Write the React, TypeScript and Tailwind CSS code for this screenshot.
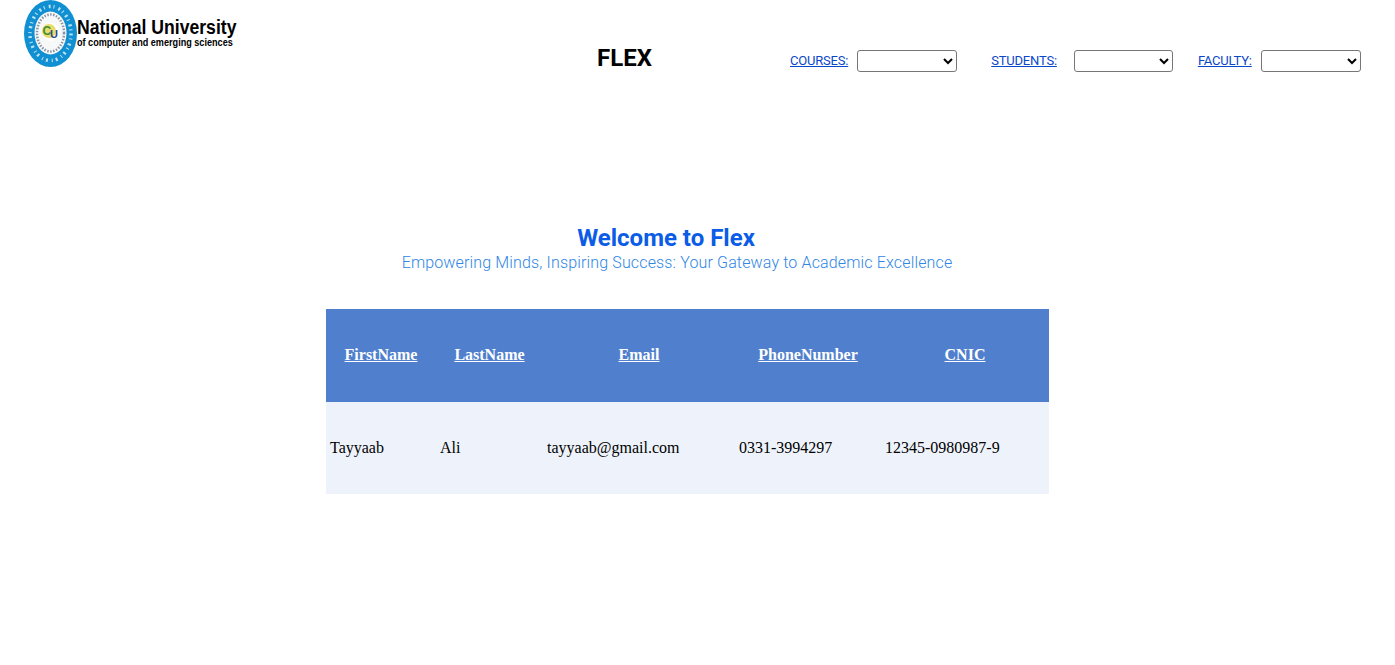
const din = "font-['Roboto',sans-serif]";

function NavSelect({ label, gap, width }: { label: string; gap: string; width: string }) {
  return (
    <div className={`flex items-center ${gap}`}>
      <a href="#" className={`${din} text-[13px] text-[#0a47c9] underline tracking-[-0.2px]`}>
        {label}
      </a>
      <select className={`h-[22px] ${width} rounded-[3px] border border-[#767676] bg-white text-[13px]`} />
    </div>
  );
}

function Logo() {
  return (
    <div className="flex items-start">
      <svg width="53" height="67" viewBox="0 0 53 67" className="shrink-0">
        <ellipse cx="26.5" cy="33.5" rx="26.5" ry="33.5" fill="#1090d2" />
        <ellipse cx="26.5" cy="33.5" rx="20.5" ry="27" fill="none" stroke="#bfe3f4" strokeWidth="3.5" strokeDasharray="2 3 1 4" />
        <ellipse cx="26.5" cy="33" rx="16" ry="21.5" fill="#f7f8f8" />
        <ellipse cx="26.5" cy="33" rx="13.5" ry="18.5" fill="none" stroke="#8a93a8" strokeWidth="2.5" strokeDasharray="1.5 1.5" />
        <circle cx="27" cy="32" r="9" fill="#fff" />
        <circle cx="25" cy="31" r="7" fill="#e9dc6a" />
        <text x="18.5" y="35" fontSize="12" fontWeight="700" fill="#3f8f3a" fontFamily="Liberation Sans, sans-serif">C</text>
        <text x="26" y="38" fontSize="11" fontWeight="700" fill="#2a4a8a" fontFamily="Liberation Sans, sans-serif">U</text>
      </svg>
      <div className="pt-[16px] font-['Liberation_Sans',sans-serif] font-bold text-black">
        <div className="text-[20px] leading-[22px] whitespace-nowrap scale-x-[0.88] origin-left">National University</div>
        <div className="text-[10px] leading-[10px] whitespace-nowrap scale-x-[0.91] origin-left">of computer and emerging sciences</div>
      </div>
    </div>
  );
}

const rows = [
  { first: 'Tayyaab', last: 'Ali', email: 'tayyaab@gmail.com', phone: '0331-3994297', cnic: '12345-0980987-9' },
];

export default function App() {
  return (
    <div className="min-h-[665px] bg-white text-black">
      <header className="flex h-[90px] items-start pl-[24px]">
        <div className="w-[573px] shrink-0">
          <Logo />
        </div>
        <h1 className={`${din} mt-[43px] w-[193px] shrink-0 text-[24px] leading-[30px] font-bold`}>FLEX</h1>
        <div className="mt-[50px] flex items-center">
          <NavSelect label="COURSES:" gap="gap-[9px]" width="w-[100px]" />
          <div className="w-[34px]" />
          <NavSelect label="STUDENTS:" gap="gap-[17px]" width="w-[99px]" />
          <div className="w-[25px]" />
          <NavSelect label="FACULTY:" gap="gap-[9px]" width="w-[100px]" />
        </div>
      </header>

      <section className={`${din} mt-[133px] text-center`}>
        <h2 className="pr-[63px] text-[24px] leading-[30px] font-bold tracking-[0px] text-[#0b5ce6]">Welcome to Flex</h2>
        <p className="ml-[-41px] text-[16px] leading-[20px] font-light tracking-[0.15px] text-[#2f86e4]">
          Empowering Minds, Inspiring Success: Your Gateway to Academic Excellence
        </p>
      </section>

      <div className="mt-[36px] pl-[326px]">
        <table className="w-[723px] table-fixed border-collapse font-['Liberation_Serif',serif] text-[16px]">
          <colgroup>
            <col className="w-[110px]" />
            <col className="w-[107px]" />
            <col className="w-[192px]" />
            <col className="w-[146px]" />
            <col className="w-[168px]" />
          </colgroup>
          <thead>
            <tr className="h-[93px] bg-[#4f7fcd] text-white underline">
              <th className="pb-[2px] font-bold">FirstName</th>
              <th className="pb-[2px] font-bold">LastName</th>
              <th className="pb-[2px] font-bold">Email</th>
              <th className="pb-[2px] font-bold">PhoneNumber</th>
              <th className="pb-[2px] font-bold">CNIC</th>
            </tr>
          </thead>
          <tbody>
            {rows.map((r) => (
              <tr key={r.email} className="h-[92px] bg-[#eef3fb]">
                <td className="px-[4px]">{r.first}</td>
                <td className="px-[4px]">{r.last}</td>
                <td className="px-[4px]">{r.email}</td>
                <td className="px-[4px]">{r.phone}</td>
                <td className="px-[4px]">{r.cnic}</td>
              </tr>
            ))}
          </tbody>
        </table>
      </div>
    </div>
  );
}
